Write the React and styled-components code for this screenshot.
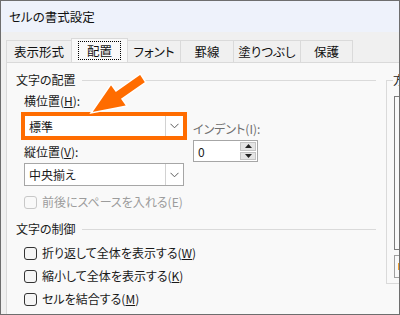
import React from 'react';
import styled, { createGlobalStyle } from 'styled-components';

const GlobalStyle = createGlobalStyle`
  html, body {
    margin: 0;
    padding: 0;
    background: #ffffff;
  }
  body {
    font-family: "Noto Sans CJK JP", "Noto Sans", sans-serif;
    font-size: 12px;
    font-feature-settings: "palt";
    color: #1a1a1a;
  }
`;

const tabs = [
  { label: '表示形式', width: 66 },
  { label: '配置', width: 57, active: true },
  { label: 'フォント', width: 54 },
  { label: '罫線', width: 54 },
  { label: '塗りつぶし', width: 68 },
  { label: '保護', width: 53 },
];

function Chevron() {
  return (
    <svg width="9" height="6" viewBox="0 0 9 6">
      <polyline points="0.5,0.8 4.5,4.8 8.5,0.8" fill="none" stroke="#5c5c5c" strokeWidth="1" />
    </svg>
  );
}

function Check({ label, accel, after, disabled, top }) {
  return (
    <CheckRow $top={top} $disabled={disabled}>
      <Box $disabled={disabled} />
      <span>
        {label}
        {accel ? (
          <>
            (<u>{accel}</u>){after}
          </>
        ) : (
          after
        )}
      </span>
    </CheckRow>
  );
}

export default function App() {
  return (
    <>
      <GlobalStyle />
      <Window>
        <TitleBar>セルの書式設定</TitleBar>
        <TabStrip>
          {tabs.map((t, i) => (
            <Tab key={t.label} $width={t.width} $active={t.active} $first={i === 0}>
              {t.active ? <FocusText>{t.label}</FocusText> : t.label}
            </Tab>
          ))}
        </TabStrip>
        <Panel>
          <MainColumn>
            <GroupHeader>
              <span>文字の配置</span>
              <Rule />
            </GroupHeader>
            <Indented>
              <AlignRow>
                <LeftCol>
                  <FieldLabel>
                    横位置(<u>H</u>):
                  </FieldLabel>
                  <Dropdown $top={6} $height={22} $highlight>
                    <DropText>標準</DropText>
                    <ChevronBox>
                      <Chevron />
                    </ChevronBox>
                  </Dropdown>
                  <FieldLabel $top={7}>
                    縦位置(<u>V</u>):
                  </FieldLabel>
                  <Dropdown $top={3} $height={23}>
                    <DropText>中央揃え</DropText>
                    <ChevronBox>
                      <Chevron />
                    </ChevronBox>
                  </Dropdown>
                </LeftCol>
                <IndentCol>
                  <FieldLabel $muted>インデント(I):</FieldLabel>
                  <SpinBox>
                    <SpinValue>0</SpinValue>
                    <SpinButtons>
                      <SpinButton>
                        <svg width="7" height="4" viewBox="0 0 7 4">
                          <polygon points="0,4 3.5,0 7,4" fill="#222" />
                        </svg>
                      </SpinButton>
                      <SpinButton>
                        <svg width="7" height="4" viewBox="0 0 7 4">
                          <polygon points="0,0 3.5,4 7,0" fill="#222" />
                        </svg>
                      </SpinButton>
                    </SpinButtons>
                  </SpinBox>
                </IndentCol>
              </AlignRow>
              <Check label="前後にスペースを入れる(E)" disabled top={8} />
            </Indented>
            <GroupHeader $top={11}>
              <span>文字の制御</span>
              <Rule />
            </GroupHeader>
            <Indented>
              <CheckList>
                <Check label="折り返して全体を表示する" accel="W" />
                <Check label="縮小して全体を表示する" accel="K" />
                <Check label="セルを結合する" accel="M" />
              </CheckList>
            </Indented>
          </MainColumn>
          <SideGroup>
            <legend>方向</legend>
            <ListBox />
            <DegreeBox>
              <OrangeMark />
            </DegreeBox>
          </SideGroup>
        </Panel>
        <ArrowLayer viewBox="0 0 400 315">
          <polygon
            points="91,113 111,84 116,91 140.3,73.8 145.8,82.3 122,99 127,106"
            fill="#ff6c00"
            stroke="#ffffff"
            strokeWidth="1.5"
            strokeLinejoin="miter"
          />
        </ArrowLayer>
      </Window>
    </>
  );
}

const Window = styled.div`
  position: relative;
  width: 400px;
  height: 315px;
  box-sizing: border-box;
  border: 1px solid #6e6e6e;
  background: #f0f0f0;
  display: flex;
  flex-direction: column;
  overflow: hidden;
`;

const TitleBar = styled.div`
  height: 31px;
  flex-shrink: 0;
  background: #eef2fb;
  display: flex;
  align-items: center;
  padding-left: 8px;
  font-size: 12.5px;
  color: #111;
`;

const TabStrip = styled.div`
  height: 30px;
  flex-shrink: 0;
  display: flex;
  align-items: flex-end;
  padding-left: 5px;
`;

const Tab = styled.div`
  position: relative;
  z-index: ${(p) => (p.$active ? 1 : 0)};
  box-sizing: border-box;
  width: ${(p) => p.$width}px;
  height: ${(p) => (p.$active ? 24 : 22)}px;
  margin-left: ${(p) => (p.$first ? 0 : -1)}px;
  border: 1px solid #dadada;
  border-bottom: none;
  background: ${(p) => (p.$active ? '#f9f9f9' : '#f0f0f0')};
  display: flex;
  align-items: center;
  justify-content: center;
  font-size: 12.5px;
  color: #111;
`;

const FocusText = styled.span`
  outline: 1px dotted #000;
  padding: 0 8px;
  line-height: 17px;
`;

const Panel = styled.div`
  flex: 1;
  margin-left: 5px;
  background: #f9f9f9;
  border-top: 1px solid #dadada;
  border-left: 1px solid #dadada;
  display: flex;
  gap: 10px;
  padding: 9px 0 0 9px;
`;

const MainColumn = styled.div`
  width: 360px;
  flex-shrink: 0;
  display: flex;
  flex-direction: column;
`;

const GroupHeader = styled.div`
  display: flex;
  align-items: center;
  gap: 6px;
  height: 16px;
  line-height: 16px;
  margin-top: ${(p) => p.$top || 0}px;
`;

const Rule = styled.div`
  flex: 1;
  height: 1px;
  background: #dadada;
`;

const Indented = styled.div`
  padding-left: 8px;
  display: flex;
  flex-direction: column;
`;

const AlignRow = styled.div`
  display: flex;
  margin-top: 5px;
`;

const LeftCol = styled.div`
  width: 160px;
  display: flex;
  flex-direction: column;
`;

const FieldLabel = styled.div`
  line-height: 16px;
  height: 16px;
  margin-top: ${(p) => p.$top || 0}px;
  color: ${(p) => (p.$muted ? '#6f6f6f' : '#1a1a1a')};
  white-space: nowrap;
`;

const Dropdown = styled.div`
  box-sizing: border-box;
  height: ${(p) => p.$height}px;
  margin-top: ${(p) => p.$top}px;
  border: 1px solid #a6a6a6;
  background: #ffffff;
  display: flex;
  outline: ${(p) => (p.$highlight ? '4px solid #ff6c00' : 'none')};
  outline-offset: -1px;
`;

const DropText = styled.div`
  flex: 1;
  padding-left: 4px;
  display: flex;
  align-items: center;
`;

const ChevronBox = styled.div`
  width: 17px;
  border-left: 1px solid #d2d2d2;
  display: flex;
  align-items: center;
  justify-content: center;
`;

const IndentCol = styled.div`
  margin-left: 9px;
  padding-top: 28px;
  display: flex;
  flex-direction: column;
`;

const SpinBox = styled.div`
  box-sizing: border-box;
  width: 65px;
  height: 22px;
  margin-top: 3px;
  border: 1px solid #a6a6a6;
  background: #ffffff;
  display: flex;
`;

const SpinValue = styled.div`
  flex: 1;
  padding-left: 4px;
  display: flex;
  align-items: center;
`;

const SpinButtons = styled.div`
  width: 16px;
  display: flex;
  flex-direction: column;
  gap: 1px;
  padding: 1px 1px 1px 0;
`;

const SpinButton = styled.div`
  flex: 1;
  background: #e4e4e4;
  border: 1px solid #c4c4c4;
  display: flex;
  align-items: center;
  justify-content: center;
`;

const CheckList = styled.div`
  display: flex;
  flex-direction: column;
  gap: 7px;
  margin-top: 8px;
`;

const CheckRow = styled.div`
  display: flex;
  align-items: center;
  gap: 5px;
  height: 16px;
  line-height: 16px;
  margin-top: ${(p) => p.$top || 0}px;
  color: ${(p) => (p.$disabled ? '#9c9c9c' : '#1a1a1a')};
  white-space: nowrap;
`;

const Box = styled.div`
  box-sizing: border-box;
  width: 13px;
  height: 13px;
  border: 1px solid ${(p) => (p.$disabled ? '#c8c8c8' : '#333333')};
  border-radius: 3px;
  background: ${(p) => (p.$disabled ? 'transparent' : '#f5f5f5')};
  flex-shrink: 0;
`;

const SideGroup = styled.fieldset`
  flex-shrink: 0;
  align-self: flex-start;
  width: 120px;
  min-width: 0;
  margin: 0;
  padding: 8px 0 5px 7px;
  border: 1px solid #dadada;

  legend {
    padding: 0;
    margin-left: -1px;
    line-height: 16px;
    font-size: 12px;
    color: #1a1a1a;
  }
`;

const ListBox = styled.div`
  box-sizing: border-box;
  height: 154px;
  border: 1px solid #7c7c7c;
  background: #f9f9f9;
`;

const DegreeBox = styled.div`
  box-sizing: border-box;
  height: 23px;
  margin-top: 5px;
  border: 1px solid #a0a0a0;
  display: flex;
  align-items: center;
  padding-left: 3px;
`;

const OrangeMark = styled.div`
  width: 3px;
  height: 7px;
  background: #f0a030;
`;

const ArrowLayer = styled.svg`
  position: absolute;
  top: -1px;
  left: -1px;
  width: 400px;
  height: 315px;
  pointer-events: none;
`;
